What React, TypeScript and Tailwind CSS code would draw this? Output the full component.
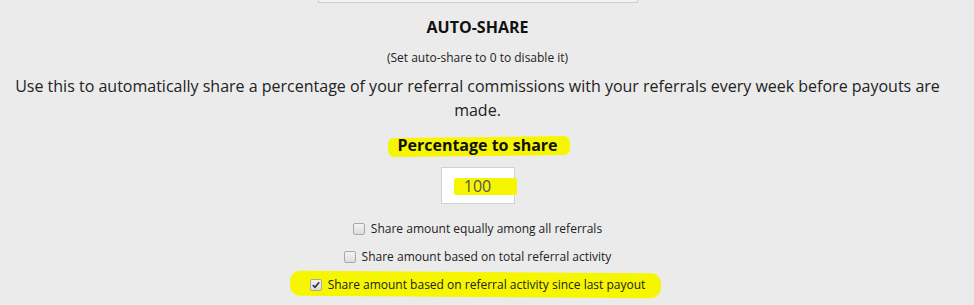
import React from "react"

const OPTIONS = [
  { label: "Share amount equally among all referrals", checked: false, marked: false },
  { label: "Share amount based on total referral activity", checked: false, marked: false },
  { label: "Share amount based on referral activity since last payout", checked: true, marked: true },
]

function Box({ checked }: { checked: boolean }) {
  return (
    <span className="relative inline-flex h-[12px] w-[12px] shrink-0 items-center justify-center rounded-[2px] border border-[#a9a9a9] bg-gradient-to-b from-[#f4f4f4] to-[#dcdcdc]">
      {checked && (
        <svg viewBox="0 0 12 12" className="h-[10px] w-[10px]">
          <path d="M2.2 6.2 L4.8 8.8 L9.8 2.6" fill="none" stroke="#333" strokeWidth="2" />
        </svg>
      )}
    </span>
  )
}

export default function App() {
  return (
    <div className="min-h-[305px] w-full bg-[#ebebeb] font-['Open_Sans',sans-serif] text-[#222]">
      <div className="flex w-[955px] flex-col items-center text-center">
        {/* top box edge */}
        <div className="h-[3px] w-[320px] border-x border-b border-[#cfcfcf] bg-[#f2f2f2]" />

        <h2 className="mt-[13px] text-[16px] font-bold leading-[22px] text-[#111]">AUTO-SHARE</h2>
        <p className="mt-[12px] text-[12px] leading-[16px] text-[#222]">(Set auto-share to 0 to disable it)</p>
        <p className="mt-[8px] px-[14px] text-[16px] leading-[24px] text-[#222]">
          Use this to automatically share a percentage of your referral commissions with your referrals every week before payouts are made.
        </p>

        <h3 className="relative mt-[12px] text-[16px] font-bold leading-[22px] text-[#111]">
          <span className="absolute left-[-9px] right-[-13px] top-[3px] h-[19px] -rotate-[0.6deg] rounded-[6px] bg-[#f6f600]" />
          <span className="relative">Percentage to share</span>
        </h3>

        <div className="relative mt-[11px] flex h-[37px] w-[74px] items-center justify-center border border-[#d2d2d2] bg-white text-[16px] text-[#555]">
          <span className="absolute left-[12px] top-[10px] h-[17px] w-[63px] rounded-[2px] bg-[#f6f600]" />
          <span className="relative">100</span>
        </div>

        <div className="mt-[15px] flex flex-col items-center gap-[8px]">
          {OPTIONS.map((o) => (
            <label key={o.label} className="relative flex h-[20px] items-center gap-[6px] text-[12px] leading-[20px] text-[#222]">
              {o.marked && (
                <span className="absolute left-[-20px] right-[-15px] top-[-3px] h-[25px] rotate-[0.4deg] rounded-[10px] bg-[#f6f600]" />
              )}
              <span className="relative flex items-center gap-[6px]">
                <Box checked={o.checked} />
                {o.label}
              </span>
            </label>
          ))}
        </div>
      </div>
    </div>
  )
}
